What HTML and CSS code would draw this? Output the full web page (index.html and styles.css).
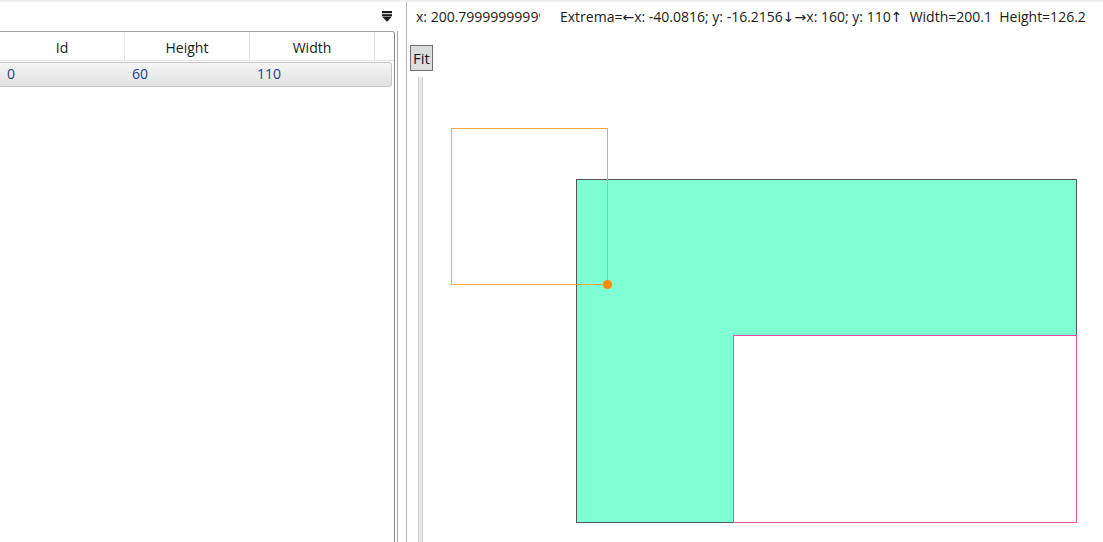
FILE: index.html
```html
<!DOCTYPE html>
<html>
<head>
<meta charset="utf-8">
<link rel="stylesheet" href="styles.css">
</head>
<body>
<div class="app">
  <div class="left">
    <div class="toolbar">
      <svg class="menu-icon" width="10" height="11" viewBox="0 0 10 11">
        <rect x="0" y="0" width="10" height="2.2" fill="#1a1a1a"/>
        <rect x="0" y="3.2" width="10" height="1.8" fill="#1a1a1a"/>
        <polygon points="0,5.6 10,5.6 5,10.8" fill="#1a1a1a"/>
      </svg>
    </div>
    <div class="list-wrap">
      <div class="list">
        <div class="header">
          <div class="hcell">Id</div>
          <div class="hcell">Height</div>
          <div class="hcell">Width</div>
          <div class="hcell filler"></div>
        </div>
        <div class="row">
          <div class="cell">0</div>
          <div class="cell">60</div>
          <div class="cell">110</div>
        </div>
      </div>
      <div class="split"></div>
    </div>
  </div>
  <div class="right">
    <div class="status">
      <span class="coord">x: 200.79999999999998</span>
      <span class="extrema">Extrema=←x: -40.0816; y: -16.2156↓→x: 160; y: 110↑&nbsp; Width=200.1&nbsp; Height=126.2</span>
    </div>
    <div class="body">
      <div class="sidebar">
        <button class="fit">Fit</button>
        <div class="track"></div>
      </div>
      <div class="canvas">
        <svg class="drawing" width="666" height="498" viewBox="0 0 666 498">
          <rect x="139.5" y="135.5" width="500" height="343" fill="#7fffd4" stroke="#4f5a56" stroke-width="1" shape-rendering="crispEdges"/>
          <rect x="296.5" y="291.5" width="343" height="187" fill="#ffffff" stroke="#e2529f" stroke-width="1" shape-rendering="crispEdges"/>
          <rect x="14.5" y="84.5" width="156" height="156" fill="none" stroke="#ffa63a" stroke-width="1" shape-rendering="crispEdges"/>
          <circle cx="170.5" cy="240.5" r="4.6" fill="#ff8c00"/>
        </svg>
      </div>
    </div>
  </div>
</div>
</body>
</html>
```

FILE: styles.css
```css
html, body {
  margin: 0;
  padding: 0;
  background: #ffffff;
}
body {
  font-family: "Open Sans", "DejaVu Sans", sans-serif;
  font-size: 14px;
  color: #1b1b1b;
}
.app {
  width: 1103px;
  height: 542px;
  border-top: 2px solid #f0f0f0;
  box-sizing: border-box;
  display: flex;
  overflow: hidden;
}
.left {
  width: 406px;
  display: flex;
  flex-direction: column;
  flex-shrink: 0;
}
.toolbar {
  height: 29px;
  display: flex;
  justify-content: flex-end;
  align-items: flex-start;
  padding-right: 14px;
  box-sizing: border-box;
}
.menu-icon {
  margin-top: 9px;
  display: block;
}
.list-wrap {
  flex: 1;
  display: flex;
}
.list {
  width: 395px;
  box-sizing: border-box;
  border-top: 1px solid #a0a3ab;
  border-right: 1px solid #828790;
  border-top-right-radius: 3px;
  overflow: hidden;
}
.header {
  display: flex;
  height: 29px;
  border-bottom: 1px solid #e5e5e5;
  box-sizing: border-box;
}
.hcell {
  width: 125px;
  box-sizing: border-box;
  border-right: 1px solid #e5e5e5;
  text-align: center;
  padding-top: 2px;
  line-height: 28px;
  flex-shrink: 0;
}
.hcell.filler {
  flex: 1;
  border-right: none;
}
.row {
  display: flex;
  width: 394px;
  height: 25px;
  margin-top: 1px;
  margin-left: -2px;
  box-sizing: border-box;
  border: 1px solid #c6c6c6;
  border-radius: 3px;
  background: linear-gradient(#f5f5f5, #e1e1e1);
  color: #23408e;
}
.cell {
  width: 125px;
  padding-left: 8px;
  box-sizing: border-box;
  line-height: 22px;
  flex-shrink: 0;
}
.split {
  width: 1px;
  margin-left: 2px;
  background: #a9a9a9;
}
.right {
  flex: 1;
  border-left: 1px solid #bcbcbc;
  display: flex;
  flex-direction: column;
  min-width: 0;
}
.status {
  height: 42px;
  padding: 5px 0 0 9px;
  box-sizing: border-box;
  display: flex;
  white-space: nowrap;
  line-height: 20px;
}
.coord {
  width: 124px;
  overflow: hidden;
  flex-shrink: 0;
}
.extrema {
  margin-left: 20px;
}
.body {
  flex: 1;
  display: flex;
}
.sidebar {
  width: 30px;
  display: flex;
  flex-direction: column;
  align-items: flex-start;
  padding-left: 3px;
  box-sizing: border-box;
}
.fit {
  margin: 1px 0 0 0;
  padding: 0;
  width: 23px;
  height: 26px;
  border: 1px solid #707070;
  background: #dddddd;
  font-family: "Open Sans", "DejaVu Sans", sans-serif;
  font-size: 15px;
  color: #1b1b1b;
  line-height: 22px;
}
.track {
  margin: 6px 0 0 8px;
  width: 5px;
  flex: 1;
  box-sizing: border-box;
  border-left: 1px solid #cfcfcf;
  border-right: 1px solid #cfcfcf;
  background: #e9e9e9;
}
.canvas {
  flex: 1;
  position: relative;
  overflow: hidden;
}
.drawing {
  position: absolute;
  left: 0;
  top: 0;
  display: block;
}
```
